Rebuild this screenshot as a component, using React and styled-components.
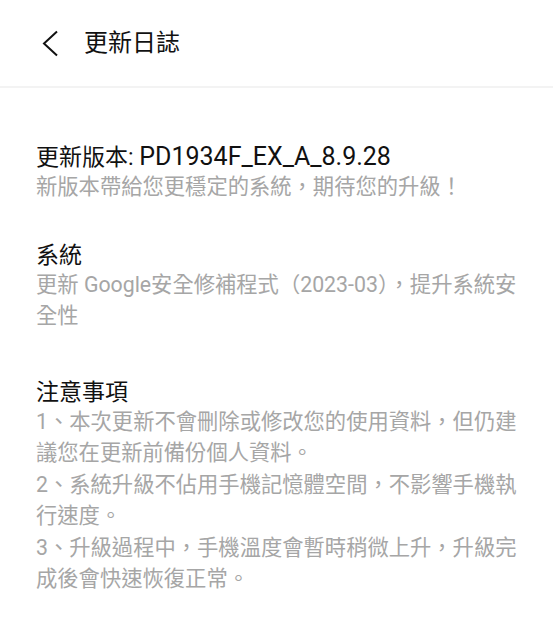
import React from 'react';
import styled, { createGlobalStyle } from 'styled-components';

const GlobalStyle = createGlobalStyle`
  html, body {
    margin: 0;
    padding: 0;
    background: #fff;
  }
  body {
    font-family: Roboto, "Noto Sans CJK TC", "Noto Sans", sans-serif;
    -webkit-font-smoothing: antialiased;
  }
`;

const Page = styled.div`
  width: 553px;
  min-height: 640px;
  background: #fff;
`;

const Header = styled.header`
  height: 86px;
  display: flex;
  align-items: center;
  padding-left: 40px;
  border-bottom: 2px solid #f3f3f3;
  box-sizing: content-box;
`;

const BackBtn = styled.button`
  width: 20px;
  height: 28px;
  padding: 0;
  margin: 0 24px 0 0;
  border: 0;
  background: none;
  display: flex;
  align-items: center;
  justify-content: center;
  cursor: pointer;
  svg {
    display: block;
  }
`;

const Title = styled.h1`
  margin: 0;
  font-size: 24px;
  font-weight: 400;
  color: #111;
  line-height: 30px;
`;

const Content = styled.main`
  padding: 56px 30px 40px 36px;
  display: flex;
  flex-direction: column;
`;

const Section = styled.section`
  display: flex;
  flex-direction: column;
  margin-bottom: ${props => props.gap || 0}px;
`;

const Heading = styled.h2`
  margin: 0;
  font-size: 23px;
  font-weight: 400;
  color: #111;
  line-height: 26px;
`;

// the version string is set larger than the CJK glyphs
const Version = styled.span`
  font-size: 25px;
`;

const Text = styled.p`
  margin: 0;
  font-size: 21.3px;
  font-weight: 400;
  color: #a6a6a6;
  line-height: 31.5px;
`;

const sections = [
  {
    title: '更新版本: ',
    version: 'PD1934F_EX_A_8.9.28',
    gap: 40,
    lines: ['新版本帶給您更穩定的系統，期待您的升級！']
  },
  {
    title: '系統',
    gap: 48,
    lines: ['更新 Google安全修補程式（2023-03），提升系統安全性']
  },
  {
    title: '注意事項',
    gap: 0,
    lines: [
      '1、本次更新不會刪除或修改您的使用資料，但仍建議您在更新前備份個人資料。',
      '2、系統升級不佔用手機記憶體空間，不影響手機執行速度。',
      '3、升級過程中，手機溫度會暫時稍微上升，升級完成後會快速恢復正常。'
    ]
  }
];

export default function App() {
  return (
    <Page>
      <GlobalStyle />
      <Header>
        <BackBtn aria-label="返回">
          <svg width="18" height="27" viewBox="0 0 18 27">
            <path d="M16 1.5 L3 13.5 L16 25.5" fill="none" stroke="#111" strokeWidth="2" />
          </svg>
        </BackBtn>
        <Title>更新日誌</Title>
      </Header>
      <Content>
        {sections.map(s => (
          <Section key={s.title} gap={s.gap}>
            <Heading>
              {s.title}
              {s.version && <Version>{s.version}</Version>}
            </Heading>
            {s.lines.map(l => (
              <Text key={l}>{l}</Text>
            ))}
          </Section>
        ))}
      </Content>
    </Page>
  );
}
